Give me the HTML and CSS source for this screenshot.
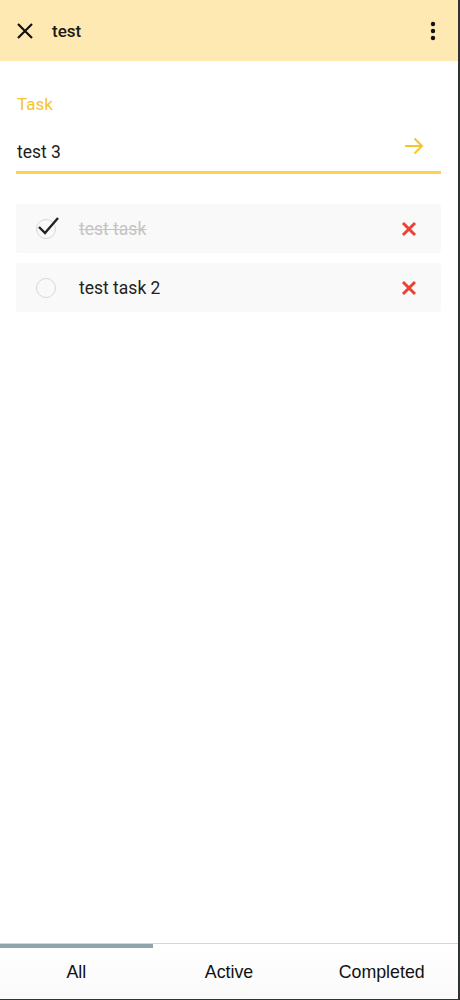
FILE: index.html
```html
<!DOCTYPE html>
<html lang="en">
<head>
    <meta charset="UTF-8">
    <meta name="viewport" content="width=device-width, initial-scale=1.0">
    <title>test</title>
    <link rel="stylesheet" href="styles.css">
</head>
<body>
    <div class="screen">
        <!-- Top bar -->
        <header class="topbar">
            <button class="icon-btn close-btn" aria-label="Close">
                <svg width="18" height="18" viewBox="0 0 18 18"><path d="M2 2 L16 16 M16 2 L2 16" stroke="#111" stroke-width="2.2" fill="none"/></svg>
            </button>
            <span class="title">test</span>
            <button class="icon-btn menu-btn" aria-label="More">
                <svg width="6" height="20" viewBox="0 0 6 20"><circle cx="3" cy="3" r="2.2" fill="#111"/><circle cx="3" cy="10" r="2.2" fill="#111"/><circle cx="3" cy="17" r="2.2" fill="#111"/></svg>
            </button>
        </header>

        <main class="content">
            <!-- New task field -->
            <label class="field-label" for="taskInput">Task</label>
            <div class="field">
                <input type="text" id="taskInput" value="test 3">
                <button class="icon-btn send-btn" aria-label="Add">
                    <svg width="20" height="18" viewBox="0 0 20 18"><path d="M1 9 H18 M10.5 1.5 L18 9 L10.5 16.5" stroke="#f6c42c" stroke-width="2" fill="none"/></svg>
                </button>
            </div>

            <!-- Tasks -->
            <ul class="tasks">
                <li class="task done">
                    <span class="check">
                        <svg width="26" height="24" viewBox="0 0 26 24"><path d="M3 12 L9 18 L22 3" stroke="#222" stroke-width="2.4" fill="none"/></svg>
                    </span>
                    <span class="task-text">test task</span>
                    <button class="icon-btn delete-btn" aria-label="Delete">
                        <svg width="16" height="16" viewBox="0 0 16 16"><path d="M2 2 L14 14 M14 2 L2 14" stroke="#ea4335" stroke-width="3" fill="none"/></svg>
                    </button>
                </li>
                <li class="task">
                    <span class="check"></span>
                    <span class="task-text">test task 2</span>
                    <button class="icon-btn delete-btn" aria-label="Delete">
                        <svg width="16" height="16" viewBox="0 0 16 16"><path d="M2 2 L14 14 M14 2 L2 14" stroke="#ea4335" stroke-width="3" fill="none"/></svg>
                    </button>
                </li>
            </ul>
        </main>

        <!-- Filter tabs -->
        <nav class="tabs">
            <div class="tab active">All</div>
            <div class="tab">Active</div>
            <div class="tab">Completed</div>
        </nav>
    </div>
</body>
</html>
```

FILE: styles.css
```css
/* General */
* {
    box-sizing: border-box;
}

body {
    margin: 0;
    font-family: Roboto, "Liberation Sans", sans-serif;
    color: #212121;
    background-color: #fff;
}

.screen {
    height: 1000px;
    display: flex;
    flex-direction: column;
    border-right: 2px solid #2f3433;
    border-bottom: 1px solid #2f3433;
}

.icon-btn {
    background: none;
    border: none;
    padding: 0;
    cursor: pointer;
    display: flex;
    align-items: center;
    justify-content: center;
}

/* Top bar */
.topbar {
    height: 61px;
    background-color: #fee9b2;
    display: flex;
    align-items: center;
    padding: 0 22px 0 16px;
}

.close-btn {
    width: 18px;
    height: 18px;
}

.title {
    flex: 1;
    margin-left: 18px;
    font-size: 17px;
    font-weight: 500;
    color: #1a1a1a;
}

/* Content */
.content {
    flex: 1;
    padding: 0 17px 0 16px;
}

.field-label {
    display: block;
    margin-top: 33px;
    padding-left: 1px;
    font-size: 17px;
    color: #f6c42c;
}

.field {
    display: flex;
    align-items: center;
    margin-top: 14px;
    height: 46px;
    border-bottom: 3px solid #fdd24f;
}

.field input {
    flex: 1;
    border: none;
    outline: none;
    padding: 0 0 0 1px;
    margin-top: 4px;
    font-family: inherit;
    font-size: 17.5px;
    color: #1c1c1c;
    background: transparent;
}

.send-btn {
    margin-right: 17px;
    margin-bottom: 8px;
}

/* Task list */
.tasks {
    list-style: none;
    margin: 30px 0 0;
    padding: 0;
    display: flex;
    flex-direction: column;
    gap: 10px;
}

.task {
    height: 49px;
    background-color: #f9f9f9;
    border-radius: 3px;
    display: flex;
    align-items: center;
    padding: 0 24px 0 20px;
}

.check {
    width: 20px;
    height: 20px;
    border: 1px solid #d8d8d8;
    border-radius: 50%;
    position: relative;
    flex-shrink: 0;
}

.check svg {
    position: absolute;
    left: -1px;
    top: -5px;
}

.task-text {
    flex: 1;
    margin-left: 23px;
    font-size: 17.5px;
    color: #222;
}

.task.done .task-text {
    color: #c4c4c4;
    text-decoration: line-through;
}

/* Bottom tabs */
.tabs {
    display: flex;
    height: 56px;
    border-top: 1px solid #d6d6d6;
    background: linear-gradient(#fff, #fafafa);
}

.tab {
    flex: 1;
    text-align: center;
    padding-top: 18px;
    font-family: "Liberation Sans", Arial, sans-serif;
    font-size: 17.8px;
    color: #111;
    position: relative;
}

.tab.active::before {
    content: "";
    position: absolute;
    left: 0;
    right: 0;
    top: 0;
    height: 4px;
    background-color: #90a4ab;
}
```
